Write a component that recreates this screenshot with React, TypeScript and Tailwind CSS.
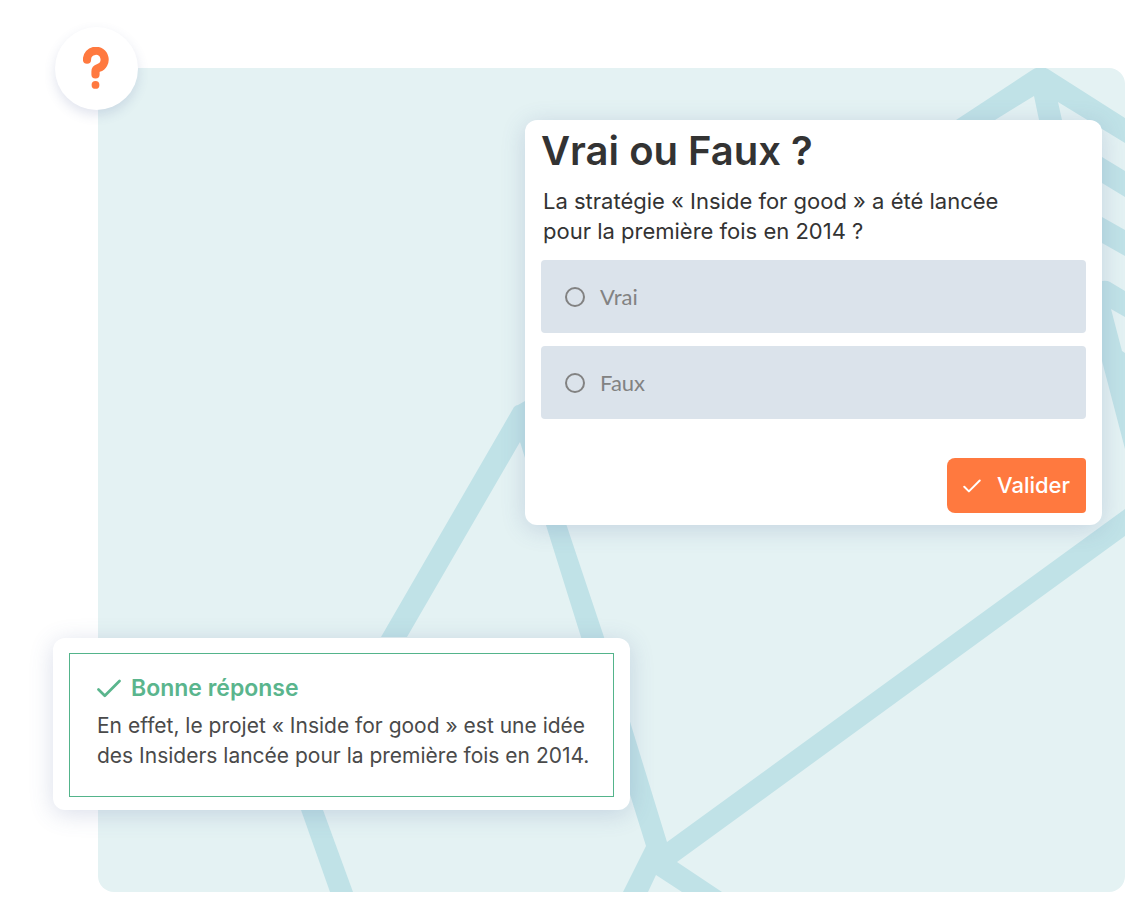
import { useState } from 'react';

const options = ['Vrai', 'Faux'];

const CheckIcon = ({ className }: { className?: string }) => (
	<svg viewBox="0 0 24 19" fill="none" className={className} aria-hidden="true">
		<path
			d="M1.5 10.5L7.8 16.8L22.5 2"
			stroke="currentColor"
			strokeWidth="2.7"
			strokeLinecap="round"
			strokeLinejoin="round"
		/>
	</svg>
);

const Backdrop = () => (
	<svg
		viewBox="98 68 1027 824"
		preserveAspectRatio="xMaxYMin slice"
		className="absolute inset-0 w-full h-full rounded-2xl bg-[#e4f2f3]"
		fill="#c0e2e7"
		aria-hidden="true"
	>
		{/* Top right star */}
		<path d="M956 120L1032 70Q1040 65 1048 69L1125 118V143L1058 102L1062 120H1039L1034 96L995 120Z" />
		<path d="M1102 157L1125 171V197L1102 183Z" />
		<path d="M1102 217L1125 230V256L1102 243Z" />
		<path d="M1102 281Q1107 280 1110 282L1125 291V317L1111 309L1122 351L1125 353V449L1102 361Z" />

		{/* Long branches */}
		<path d="M381 637L514 407Q516 405 518 405L525 401L604 637L667 842L1125 509V536L677 862L722 892H682L656 875L648 892H623L646 846L581 637L520 442L407 637Z" />
		<path d="M301 810H323L353 892H330Z" />
	</svg>
);

const HelpBadge = () => (
	<div className="absolute -top-[41px] -left-[43px] w-[83px] h-[83px] flex items-center justify-center rounded-full bg-white shadow-[0_5px_12px_rgba(70,90,150,0.16)]">
		<svg width="28" height="44" viewBox="82 46 28 44" fill="none" aria-hidden="true">
			<path
				d="M86 58.7A8.8 8.8 0 1 1 97.6 66.9Q94.5 67.9 94.5 70.4V73.4"
				stroke="#ff793f"
				strokeWidth="8.2"
				strokeLinecap="round"
				strokeLinejoin="round"
			/>
			<circle cx="94.5" cy="83.9" r="3.9" fill="#ff793f" />
		</svg>
	</div>
);

const QuestionCard = () => {
	const [answer, setAnswer] = useState('');

	return (
		<form
			onSubmit={(e) => e.preventDefault()}
			className="relative ml-auto mr-[23px] w-[577px] rounded-xl bg-white px-4 pt-2 pb-3 shadow-[0_4px_24px_rgba(70,90,150,0.2)]"
		>
			<h1 className="text-[40px] leading-[46px] font-semibold text-[#333333]">
				Vrai ou Faux ?
			</h1>
			<fieldset>
				<legend className="pl-0.5 pt-3 pb-3.5 text-[22px] leading-[30px] text-[#333333]">
					La stratégie « Inside for good » a été lancée
					<br />
					pour la première fois en 2014 ?
				</legend>
				<div className="flex flex-col gap-[13px]">
					{options.map((option) => (
						<label
							key={option}
							className="flex items-center gap-[15px] h-[73px] px-6 rounded bg-[#dbe3eb] font-[Lato,sans-serif] text-[22px] text-[#828282] cursor-pointer"
						>
							<input
								type="radio"
								name="answer"
								value={option}
								checked={answer === option}
								onChange={() => setAnswer(option)}
								className="appearance-none w-5 h-5 rounded-full border-2 border-[#828282] checked:bg-[#828282]"
							/>
							{option}
						</label>
					))}
				</div>
			</fieldset>
			<button
				type="submit"
				className="flex items-center gap-4 ml-auto mt-[39px] h-[55px] px-4 rounded-l-lg rounded-r bg-[#ff793f] text-[22px] font-medium text-white cursor-pointer"
			>
				<CheckIcon className="w-[18px] h-[14px]" />
				Valider
			</button>
		</form>
	);
};

const AnswerCard = () => (
	<section className="relative -ml-[45px] mt-[113px] w-[577px] rounded-xl bg-white px-4 pt-[15px] pb-[13px] shadow-[0_4px_24px_rgba(70,90,150,0.2)]">
		<div className="h-[144px] border border-[#54b48b] px-[27px] pt-[19px]">
			<h2 className="flex items-center gap-2.5 text-[23px] leading-[30px] font-semibold text-[#5ab58d]">
				<CheckIcon className="w-6 h-[19px]" />
				Bonne réponse
			</h2>
			<p className="mt-2 text-[21px] leading-[30px] whitespace-nowrap text-[#4a4a4a]">
				En effet, le projet « Inside for good » est une idée
				<br />
				des Insiders lancée pour la première fois en 2014.
			</p>
		</div>
	</section>
);

const App = () => (
	<main className="bg-white pt-[68px] pl-[98px] pb-[9px] font-[Inter,sans-serif]">
		<div className="relative pt-[52px] pb-[82px]">
			<Backdrop />
			<HelpBadge />
			<QuestionCard />
			<AnswerCard />
		</div>
	</main>
);

export default App;
